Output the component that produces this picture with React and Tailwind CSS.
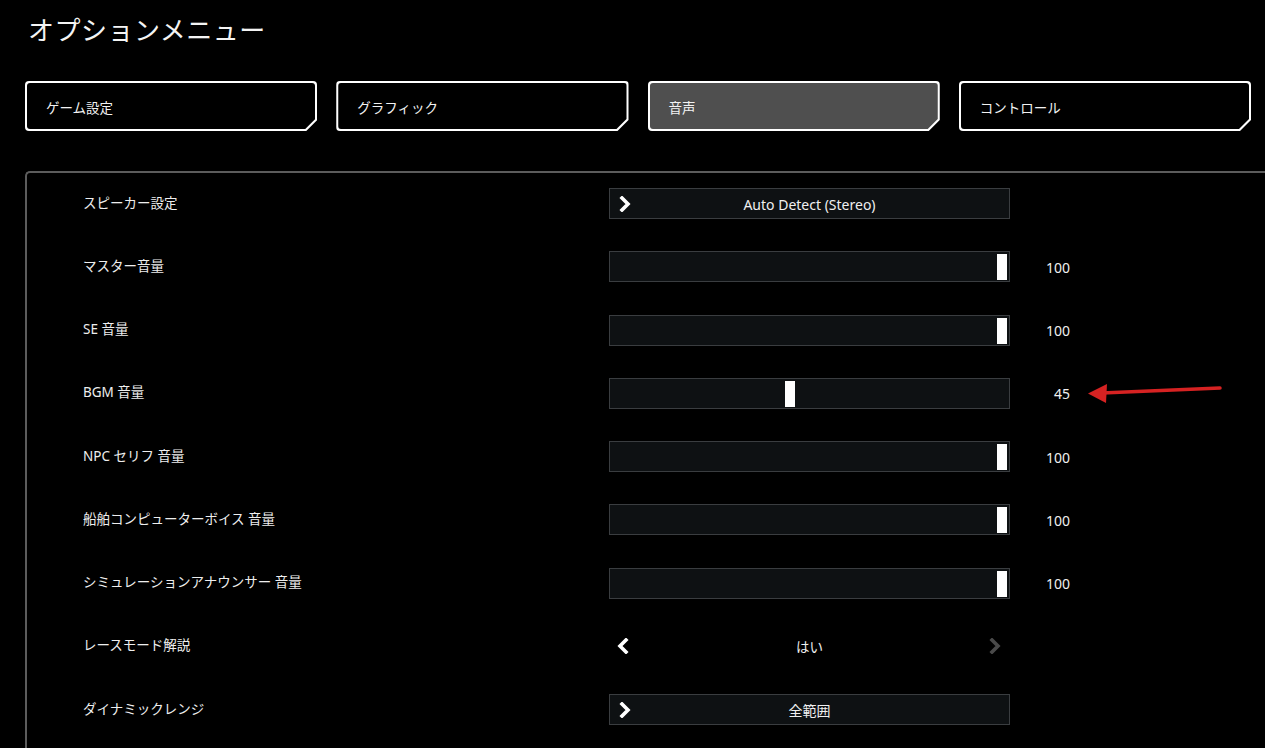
import React from 'react';

const font = { fontFamily: '"Noto Sans", "Noto Sans CJK JP", sans-serif' };

const tabs = [
  { label: 'ゲーム設定' },
  { label: 'グラフィック' },
  { label: '音声', active: true },
  { label: 'コントロール' },
];

const rows = [
  { label: 'スピーカー設定', type: 'select', value: 'Auto Detect (Stereo)' },
  { label: 'マスター音量', type: 'slider', value: 100 },
  { label: 'SE 音量', type: 'slider', value: 100 },
  { label: 'BGM 音量', type: 'slider', value: 45, arrow: true },
  { label: 'NPC セリフ 音量', type: 'slider', value: 100 },
  { label: '船舶コンピューターボイス 音量', type: 'slider', value: 100 },
  { label: 'シミュレーションアナウンサー 音量', type: 'slider', value: 100 },
  { label: 'レースモード解説', type: 'toggle', value: 'はい' },
  { label: 'ダイナミックレンジ', type: 'select', value: '全範囲' },
];

const Chevron = ({ left = false, color = '#ffffff' }) => (
  <svg width="14" height="16" viewBox="0 0 14 16" className="shrink-0">
    <path
      d={left ? 'M10 2 L4 8 L10 14' : 'M4 2 L10 8 L4 14'}
      fill="none"
      stroke={color}
      strokeWidth="3.6"
      strokeLinecap="square"
      strokeLinejoin="miter"
    />
  </svg>
);

const Tab = ({ label, active }) => (
  <div className="relative h-[50px] rounded-[4px] bg-white [clip-path:polygon(0_0,100%_0,100%_calc(100%_-_11px),calc(100%_-_11px)_100%,0_100%)]">
    <div
      className={`absolute inset-[2px] flex items-center rounded-[3px] pl-[19px] pt-[5px] text-[13.5px] text-[#f2f2f2] [clip-path:polygon(0_0,100%_0,100%_calc(100%_-_10px),calc(100%_-_10px)_100%,0_100%)] ${
        active ? 'bg-[#4f4f4f]' : 'bg-black'
      }`}
    >
      {label}
    </div>
  </div>
);

const Control = ({ row }) => {
  if (row.type === 'select') {
    return (
      <div className="relative flex h-[31px] items-center border border-[#3a3d40] bg-[#0e1113] pl-[8px]">
        <Chevron />
        <span className="absolute inset-0 flex items-center justify-center pt-[2px] text-[14px] text-[#f0f0f0]">
          {row.value}
        </span>
      </div>
    );
  }
  if (row.type === 'toggle') {
    return (
      <div className="relative flex h-[31px] items-center justify-between pl-[7px] pr-[8px]">
        <Chevron left />
        <span className="absolute inset-0 flex items-center justify-center pt-[2px] text-[13.5px] text-[#f0f0f0]">
          {row.value}
        </span>
        <Chevron color="#4a4a4a" />
      </div>
    );
  }
  return (
    <div className="relative h-[31px] border border-[#3a3d40] bg-[#0e1113]">
      <div
        className="absolute top-[2px] bottom-[1px] w-[10px] bg-white"
        style={{ left: `${1 + (row.value / 100) * 386}px` }}
      />
    </div>
  );
};

// red annotation arrow pointing at the BGM value
const Arrow = () => (
  <svg
    width="140"
    height="26"
    viewBox="0 0 140 26"
    className="absolute left-[1059px] top-[18px]"
  >
    <path d="M16 13 L134 8" stroke="#d62222" strokeWidth="3.5" strokeLinecap="round" />
    <path d="M2 13.5 L21 4 L20 23 Z" fill="#d62222" />
  </svg>
);

export default function App() {
  return (
    <div className="min-h-[748px] bg-black pl-[25px] text-white" style={font}>
      <div className="pl-[3px] pt-[12px] text-[26px] leading-[36px] tracking-[0.5px] text-[#f4f4f4]">
        オプションメニュー
      </div>

      <div className="mr-[14px] mt-[33px] grid grid-cols-4 gap-[19px]">
        {tabs.map((t) => (
          <Tab key={t.label} {...t} />
        ))}
      </div>

      <div className="mt-[40px] rounded-tl-[5px] border-l-2 border-t-2 border-[#5c5c5c] pb-[10px]">
        <div className="-mt-[1px]">
          {rows.map((row) => (
            <div key={row.label} className="relative flex h-[63.25px] items-center">
              <div className="w-[582px] shrink-0 pb-[2px] pl-[56px] text-[13.5px] text-[#eeeeee]">
                {row.label}
              </div>
              <div className="w-[401px] shrink-0">
                <Control row={row} />
              </div>
              <div className="w-[60px] shrink-0 pt-[1px] text-right text-[14px] text-[#f0f0f0]">
                {row.type === 'slider' ? row.value : ''}
              </div>
              {row.arrow && <Arrow />}
            </div>
          ))}
        </div>
      </div>
    </div>
  );
}
